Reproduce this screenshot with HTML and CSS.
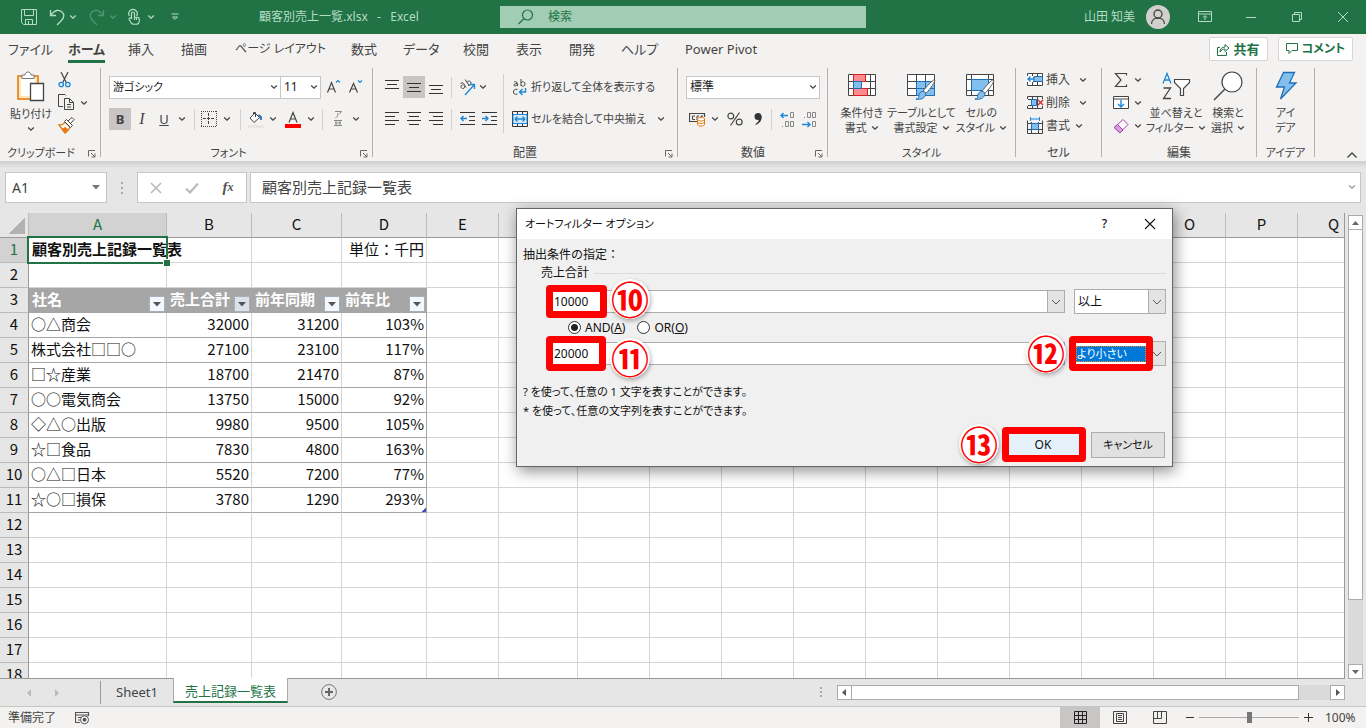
FILE: index.html
```html
<!DOCTYPE html>
<html lang="ja">
<head>
<meta charset="utf-8">
<title>顧客別売上一覧.xlsx - Excel</title>
<link rel="stylesheet" href="styles.css">
</head>
<body>
<svg class="sprite" aria-hidden="true">
  <symbol id="chev" viewBox="0 0 8 8"><path d="M1.200 2.500 4 5.200l2.800-2.700" fill="none" stroke="currentColor" stroke-width="1.300"/></symbol>
  <symbol id="launch" viewBox="0 0 8 8"><path d="M.5 6.500V.5H7M3 3l3.500 3.500M7 3.500V7H3.500" fill="none" stroke="currentColor"/></symbol>
  <symbol id="brush" viewBox="0 0 24 24"><path d="M21.500 1c1.500 1-5 10-9 14l-3-2.500C13 8 20 0 21.500 1z" fill="#fff" stroke="#555"/><path d="M9 13c3 0 4 2 3 4-1 3-5 5-10 4 3-1 3-2 3-4s2-4 4-4z" fill="#83beec" stroke="#1e6fb8"/></symbol>
</svg>

<header class="titlebar">
  <div class="qat">
    <button aria-label="上書き保存"><svg width="18" height="18" viewBox="0 0 18 18"><path d="M1.500 1.500h15v15h-13l-2-2zM4.500 1.500v6h9v-6M5.500 16.500v-5h7v5M8.500 13v3" fill="none" stroke="currentColor"/></svg></button>
    <button aria-label="元に戻す"><svg width="16" height="18" viewBox="0 0 16 18"><path d="M1.500 2v5.500H7M2 7c3-5 8-6 11-3s2 6-1 9l-4 4" fill="none" stroke="currentColor" stroke-width="1.300"/></svg><svg class="chev"><use href="#chev"/></svg></button>
    <button class="dim" aria-label="やり直し"><svg width="16" height="18" viewBox="0 0 16 18"><path d="M14.500 2v5.500H9M14 7C11 2 6 1 3 4s-2 6 1 9l4 4" fill="none" stroke="currentColor" stroke-width="1.300"/></svg><svg class="chev"><use href="#chev"/></svg></button>
    <button aria-label="タッチ/マウス モードの切り替え"><svg width="16" height="18" viewBox="0 0 16 18"><path d="M2.500 8A4.200 4.200 0 1 1 9.500 8M4.500 11V5.500a1.500 1.500 0 0 1 3 0V10M4.500 10.500c-2-1.500-3 0-2 1.500l2 3.500c1 1 6 1 7 0 1-2 1-4 .5-5.500-1-1-3-1-4.500-1M7.500 7v5M9.500 9v3" fill="none" stroke="currentColor" stroke-width="1.200"/></svg><svg class="chev"><use href="#chev"/></svg></button>
    <button aria-label="クイック アクセス ツール バーのユーザー設定"><svg width="8" height="8" viewBox="0 0 8 8"><path d="M.5 1h7M1.500 4 4 6.500 6.500 4z" fill="none" stroke="currentColor"/></svg></button>
  </div>
  <h1 class="doc-title">顧客別売上一覧.xlsx&nbsp;&nbsp; - &nbsp;&nbsp;Excel</h1>
  <label class="search">
    <svg width="16" height="16" viewBox="0 0 16 16"><circle cx="9.500" cy="6" r="5" fill="none" stroke="currentColor" stroke-width="1.200"/><path d="M6 9.500.5 15" stroke="currentColor" stroke-width="1.300"/></svg>
    <input type="search" placeholder="検索" aria-label="検索">
  </label>
  <div class="account">
    <span>山田 知美</span>
    <svg width="24" height="24" viewBox="0 0 24 24"><circle cx="12" cy="12" r="12" fill="#d2d0ce"/><circle cx="12" cy="9" r="4" fill="none" stroke="#444" stroke-width="1.300"/><path d="M5.500 19c0-8 13-8 13 0" fill="none" stroke="#444" stroke-width="1.300"/></svg>
  </div>
  <div class="winbtns">
    <button aria-label="リボンの表示オプション"><svg width="14" height="12" viewBox="0 0 14 12"><path d="M.5.5h13v10H.5zM.5 3h13M7 9V5M5 6.500 7 4.500l2 2" fill="none" stroke="currentColor"/></svg></button>
    <button aria-label="最小化"><svg width="12" height="12" viewBox="0 0 12 12"><path d="M1 6.500h10" stroke="currentColor"/></svg></button>
    <button aria-label="元に戻す(縮小)"><svg width="12" height="12" viewBox="0 0 12 12"><path d="M1.500 3.500h7v7h-7zM3.500 3.500v-2h7v7h-2" fill="none" stroke="currentColor"/></svg></button>
    <button aria-label="閉じる"><svg width="12" height="12" viewBox="0 0 12 12"><path d="m1 1 10 10M11 1 1 11" stroke="currentColor"/></svg></button>
  </div>
</header>

<nav class="tabbar">
  <div class="tabs">
    <button>ファイル</button><button class="current">ホーム</button><button>挿入</button><button>描画</button><button class="kana">ページ レイアウト</button><button>数式</button><button>データ</button><button>校閲</button><button>表示</button><button>開発</button><button>ヘルプ</button><button>Power Pivot</button>
  </div>
  <button class="pill"><svg width="13" height="13" viewBox="0 0 13 13"><path d="M3 4.500H.5v8h9V9M3 9c0-3 2-5 5-5V1.500L12 5 8 8.500V6C6 6 4 7 3 9z" fill="none" stroke="currentColor"/></svg>共有</button>
  <button class="pill kana"><svg width="12" height="12" viewBox="0 0 12 12"><path d="M.5.5h11v7H6l-3 3v-3H.5z" fill="none" stroke="currentColor"/></svg>コメント</button>
</nav>

<section class="ribbon">
  <div class="group g-clip">
    <div class="body">
      <button class="big paste"><svg width="28" height="31" viewBox="0 0 28 31"><path d="M1 5h20v23H1z" fill="#ffe7b5" stroke="#e8760a" stroke-width="1.500"/><path d="M4 8h14v17H4z" fill="#fff"/><path d="M5 7.500V4h3c0-4 6-4 6 0h3v3.500z" fill="#fff" stroke="#777"/><path d="M13.500 12.500h13v17h-13z" fill="#fff" stroke="#444" stroke-width="1.300"/></svg><span>貼り付け</span><svg class="chev"><use href="#chev"/></svg></button>
      <div class="stack">
        <button aria-label="切り取り"><svg width="14" height="17" viewBox="0 0 14 17"><path d="M3 1l5.500 11M10 1 4.500 12" stroke="#444" stroke-width="1.200"/><circle cx="3.200" cy="13.500" r="2.200" fill="none" stroke="#1c87d6" stroke-width="1.300"/><circle cx="9.800" cy="13.500" r="2.200" fill="none" stroke="#1c87d6" stroke-width="1.300"/></svg></button>
        <button aria-label="コピー"><svg width="17" height="17" viewBox="0 0 17 17"><path d="M5 12.500H.5V.5H7l1 1M6.500 4.500h5l4 4v7h-9zM11.500 4.500v4h4M9 10.500h4M9 13h4" fill="none" stroke="#444"/></svg><svg class="chev"><use href="#chev"/></svg></button>
        <button aria-label="書式のコピー/貼り付け"><svg width="17" height="17" viewBox="0 0 17 17"><path d="M1 8c3 0 5-1 6-3l5 5c-1 3-3 4-5 6z" fill="#fff" stroke="#e8760a" stroke-width="1.400"/><path d="M4 12l3-2 3 2-3 3.500z" fill="#e8760a"/><path d="m6.500 4.500 2-2 6 6-2 2zM10 4l4-3.500 2 2L12.500 6.500" fill="#fff" stroke="#444"/></svg></button>
      </div>
    </div>
    <footer>クリップボード<svg class="launch"><use href="#launch"/></svg></footer>
  </div>

  <div class="group g-font">
    <div class="body rows">
      <div class="row fontpick">
        <span class="pick"><select aria-label="フォント"><option>游ゴシック</option></select><svg class="chev"><use href="#chev"/></svg></span>
        <span class="pick size"><select aria-label="フォント サイズ"><option>11</option></select><svg class="chev"><use href="#chev"/></svg></span>
        <button aria-label="拡大"><svg width="16" height="16" viewBox="0 0 16 16"><path d="M1.500 13.500 5.500 3.500l4 10M3 10h5" fill="none" stroke="#444" stroke-width="1.200"/><path d="M10 3.500 12 1.500l2 2" fill="none" stroke="#1c87d6" stroke-width="1.200"/></svg></button>
        <button aria-label="縮小"><svg width="16" height="16" viewBox="0 0 16 16"><path d="M1.500 13.500 5.500 4.500l4 9M3 10h5" fill="none" stroke="#444" stroke-width="1.200"/><path d="M10 1.500 12 3.500l2-2" fill="none" stroke="#1c87d6" stroke-width="1.200"/></svg></button>
      </div>
      <div class="row fonttools">
        <button class="on"><b>B</b></button><button><i class="serif">I</i></button><button><u>U</u></button><button aria-label="下線の種類"><svg class="chev"><use href="#chev"/></svg></button><hr>
        <button aria-label="罫線"><svg width="16" height="16" viewBox="0 0 16 16"><path d="M0 .5h16M0 15.500h16M.5 0v16M15.500 0v16" stroke="#444" stroke-dasharray="1 1"/><path d="M7.500 2v12M2 7.500h12" stroke="#444" stroke-dasharray="3 1"/></svg></button><button aria-label="罫線の種類"><svg class="chev"><use href="#chev"/></svg></button><hr>
        <button aria-label="塗りつぶし"><svg width="16" height="17" viewBox="0 0 16 17"><path d="m2 7 5-5 4.500 4.500-5.500 5zM5.500 4V1.500h2V6" fill="#fff" stroke="#444"/><path d="M10.500 4c3 0 3.500 3 2.500 5-1-1-.5-3-2.500-5z" fill="#1c6fb8" stroke="#1c6fb8"/><path d="M0 14h16v3H0z" fill="#e8e6e4"/></svg></button><button aria-label="塗りつぶしの色"><svg class="chev"><use href="#chev"/></svg></button>
        <button aria-label="フォントの色"><svg width="16" height="17" viewBox="0 0 16 17"><path d="M4 11.500 8 1.500l4 10M5.500 8h5" fill="none" stroke="#444" stroke-width="1.200"/><path d="M0 13h16v4H0z" fill="#f00"/></svg></button><button aria-label="色の選択"><svg class="chev"><use href="#chev"/></svg></button><hr>
        <button aria-label="ふりがな"><svg width="12" height="18" viewBox="0 0 12 18"><path d="M3 1.500h6.500L7.500 4M6 3c0 3-1 4-2.500 5M2 10.500h8M3 13h6M2 15.500h8M4 10.500v5M8 10.500v5" fill="none" stroke="#888"/></svg></button><button aria-label="ふりがなの設定"><svg class="chev"><use href="#chev"/></svg></button>
      </div>
    </div>
    <footer>フォント<svg class="launch"><use href="#launch"/></svg></footer>
  </div>

  <div class="group g-align">
    <div class="body">
      <div class="rows">
        <div class="row aligntools first">
          <button aria-label="上揃え"><svg width="14" height="14" viewBox="0 0 14 14"><path d="M0 .5h14M2 4.500h10M0 8.500h14" stroke="#333"/></svg></button>
          <button class="on" aria-label="上下中央揃え"><svg width="14" height="14" viewBox="0 0 14 14"><path d="M0 3.500h14M2 7.500h10M0 11.500h14" stroke="#333"/></svg></button>
          <button aria-label="下揃え"><svg width="14" height="14" viewBox="0 0 14 14"><path d="M0 5.500h14M2 9.500h10M0 13.500h14" stroke="#333"/></svg></button><hr>
          <button aria-label="方向"><svg width="17" height="17" viewBox="0 0 17 17"><path d="M1.500 5c1-2 3-1 3.500 0l2 3.500M4.500 6C2 5 1 9 3.500 9.500 5.500 9.500 6 8 5.500 7M6 .5l4.500 6.500M8 3.500c1-2.500 4-1.500 4 .5 0 2-2 3-3 2" fill="none" stroke="#444"/><path d="M6 16 15 6M11 5.500h4.500V10" fill="none" stroke="#1c87d6" stroke-width="1.300"/></svg></button>
          <button aria-label="方向の種類"><svg class="chev"><use href="#chev"/></svg></button>
        </div>
        <div class="row aligntools">
          <button aria-label="左揃え"><svg width="14" height="14" viewBox="0 0 14 14"><path d="M0 .5h14M0 4.500h10M0 8.500h14M0 12.500h10" stroke="#333"/></svg></button>
          <button aria-label="中央揃え"><svg width="14" height="14" viewBox="0 0 14 14"><path d="M0 .5h14M2 4.500h10M0 8.500h14M2 12.500h10" stroke="#333"/></svg></button>
          <button aria-label="右揃え"><svg width="14" height="14" viewBox="0 0 14 14"><path d="M0 .5h14M4 4.500h10M0 8.500h14M4 12.500h10" stroke="#333"/></svg></button><hr>
          <button aria-label="インデントを減らす"><svg width="15" height="14" viewBox="0 0 15 14"><path d="M0 .5h15M9 4.500h6M9 8.500h6M0 12.500h15" stroke="#333"/><path d="M1 6.500h6M3.500 4 1 6.500 3.500 9" fill="none" stroke="#1c87d6" stroke-width="1.400"/></svg></button>
          <button aria-label="インデントを増やす"><svg width="15" height="14" viewBox="0 0 15 14"><path d="M0 .5h15M9 4.500h6M9 8.500h6M0 12.500h15" stroke="#333"/><path d="M0 6.500h6M3.500 4 6 6.500 3.500 9" fill="none" stroke="#1c87d6" stroke-width="1.400"/></svg></button>
        </div>
      </div>
      <hr class="tall">
      <div class="rows">
        <div class="row"><button class="wide"><svg width="16" height="18" viewBox="0 0 16 18"><path d="M2 4c2-1 4 0 3.500 4M5.500 5.500C2 5 1 8 3 8c1.500 0 2-1 2.500-2M9 1v7M9 5c1-2 4-1.500 4 1s-3 3-4 1M5.500 11.500c-3-1-4 1-4 2.500s1 3 4 2" fill="none" stroke="#444"/><path d="M13.500 10v4H8M10.500 11 7.500 14l3 3" fill="none" stroke="#1c87d6" stroke-width="1.400"/></svg>折り返して全体を表示する</button></div>
        <div class="row"><button class="wide merge"><svg width="16" height="16" viewBox="0 0 16 16"><path d="M.5.5h15v15H.5zM5.500.5v3M10.500.5v3M5.500 12.500v3M10.500 12.500v3" fill="none" stroke="#333"/><path d="M1 3.500h14v9H1z" fill="#d5ebfa" stroke="#1c87d6"/><path d="M3 8h10M5.500 5.500 3 8l2.500 2.500M10.500 5.500 13 8l-2.500 2.500" fill="none" stroke="#1c87d6" stroke-width="1.300"/></svg><span>セルを結合して中央揃え</span><svg class="chev"><use href="#chev"/></svg></button></div>
      </div>
    </div>
    <footer>配置<svg class="launch"><use href="#launch"/></svg></footer>
  </div>

  <div class="group g-num">
    <div class="body rows">
      <div class="row"><span class="pick"><select aria-label="表示形式"><option>標準</option></select><svg class="chev"><use href="#chev"/></svg></span></div>
      <div class="row numtools">
        <button aria-label="通貨表示形式"><svg width="17" height="16" viewBox="0 0 17 16"><path d="M8 10.500H.5v-8h15V6" fill="none" stroke="#444" stroke-width="1.200"/><path d="M6 5H3.500v3.500H6M8 9V5h2M12 8V5h2" fill="none" stroke="#444"/><path d="M8.500 8c0-2 7-2 7 0v5.500c0 2-7 2-7 0z" fill="#fff" stroke="#e8760a"/><path d="M8.500 8.500c0 2 7 2 7 0M8.500 11c0 2 7 2 7 0" fill="none" stroke="#e8760a"/></svg></button>
        <button aria-label="通貨の種類"><svg class="chev"><use href="#chev"/></svg></button>
        <button aria-label="パーセント スタイル"><svg width="16" height="16" viewBox="0 0 16 16"><circle cx="3.800" cy="5" r="2.900" fill="none" stroke="#444" stroke-width="1.200"/><circle cx="12.200" cy="11" r="2.900" fill="none" stroke="#444" stroke-width="1.200"/><path d="m12.500 1.500-9 13" stroke="#444" stroke-width="1.200"/></svg></button>
        <button aria-label="桁区切りスタイル"><svg width="10" height="14" viewBox="0 0 10 14"><circle cx="5" cy="4.500" r="3.500" fill="#333"/><path d="M8.500 4c.5 4-1 7-6 9v-1c3-2 4-4 3-7z" fill="#333"/></svg></button><hr>
        <button aria-label="小数点以下の表示桁数を増やす"><svg width="17" height="17" viewBox="0 0 17 17"><path d="M2 4.500h7M4.500 2 2 4.500 4.500 7" fill="none" stroke="#1c87d6" stroke-width="1.400"/><path d="M11.500 1.500h3v5h-3zM6.500 10.500h3v5h-3zM11.500 10.500h3v5h-3zM3 15.500h1" fill="none" stroke="#888"/></svg></button>
        <button aria-label="小数点以下の表示桁数を減らす"><svg width="17" height="17" viewBox="0 0 17 17"><path d="M1 13.500h8M6.500 11 9 13.500 6.500 16" fill="none" stroke="#1c87d6" stroke-width="1.400"/><path d="M6.500 1.500h3v5h-3zM11.500 1.500h3v5h-3zM11.500 10.500h3v5h-3zM3 6.500h1" fill="none" stroke="#888"/></svg></button>
      </div>
    </div>
    <footer>数値<svg class="launch"><use href="#launch"/></svg></footer>
  </div>

  <div class="group g-style">
    <div class="body">
      <button class="big"><svg width="30" height="30" viewBox="0 0 30 30"><path d="M1.500 3.500h27v21h-27zM6.500 3v21M23.500 3v21M1.500 10.500h27M1.500 17.500h27" fill="#fff" stroke="#444"/><path d="M6.500 3.500h12v7h-12zM6.500 17.500h14v7h-14z" fill="#ff8b90" stroke="#d81e1e"/><path d="M6.500 10.500h8v7h-8z" fill="#83beec" stroke="#1e6fb8"/></svg><span>条件付き<br>書式<svg class="chev"><use href="#chev"/></svg></span></button>
      <button class="big"><svg width="32" height="30" viewBox="0 0 32 30"><path d="M1.500 3.500h27v21h-27zM10.500 3v21M19.500 3v21M1.500 10.500h27M1.500 17.500h27" fill="#fff" stroke="#444"/><path d="M10.500 10.500h18v14h-18zM19.500 10.500v14M10.500 17.500h18" fill="#83beec" stroke="#1e6fb8"/><use href="#brush" x="8" y="8" width="23" height="23"/></svg><span>テーブルとして<br>書式設定<svg class="chev"><use href="#chev"/></svg></span></button>
      <button class="big"><svg width="32" height="30" viewBox="0 0 32 30"><path d="M1.500 3.500h27v21h-27zM6.500 3v21M23.500 3v21M1.500 8.500h27M1.500 19.500h27" fill="#fff" stroke="#444"/><path d="M6.500 8.500h17v11h-17z" fill="#83beec" stroke="#1e6fb8"/><use href="#brush" x="8" y="8" width="23" height="23"/></svg><span>セルの<br>スタイル<svg class="chev"><use href="#chev"/></svg></span></button>
    </div>
    <footer>スタイル</footer>
  </div>

  <div class="group g-cell">
    <div class="body stack">
      <button><svg width="17" height="16" viewBox="0 0 17 16"><path d="M.5 1.500h15v12H.5zM5.500 1v12M10.500 1v12M.5 5.500h15M.5 9.500h15" fill="#fff" stroke="#444"/><path d="M7 4.500h8.500v5H7z" fill="#83beec" stroke="#1e6fb8"/><path d="M0 4h6v6H0z" fill="#fff"/><path d="M1 7h6M3.500 4.500 1 7l2.500 2.500" fill="none" stroke="#1c87d6" stroke-width="1.300"/></svg><span>挿入</span><svg class="chev"><use href="#chev"/></svg></button>
      <button><svg width="17" height="16" viewBox="0 0 17 16"><path d="M.5 4V1.500h15V4M.5 11v2.500h15V11M5.500 1v12M10.500 1v12M1 4.500h8M1 10.500h8" fill="none" stroke="#444"/><path d="M4.500 4.500h5v6h-5z" fill="#83beec" stroke="#1e6fb8"/><path d="m11 5 5 5M16 5l-5 5" stroke="#e0282e" stroke-width="1.400"/></svg><span>削除</span><svg class="chev"><use href="#chev"/></svg></button>
      <button><svg width="17" height="17" viewBox="0 0 17 17"><path d="M3.500 0v4M12.500 0v4M4 2h8" stroke="#1c87d6"/><path d="M.5 3.500v13h15v-13M4.500 5v11M11.500 5v11M.5 6.500h15M.5 12.500h15" fill="none" stroke="#444"/><path d="M4.500 6.500h7v6h-7z" fill="#83beec" stroke="#1e6fb8"/></svg><span>書式</span><svg class="chev"><use href="#chev"/></svg></button>
    </div>
    <footer>セル</footer>
  </div>

  <div class="group g-edit">
    <div class="body">
      <div class="stack">
        <button aria-label="合計"><svg width="16" height="16" viewBox="0 0 16 16"><path d="M13.500 3.500v-2h-11L8 8l-5.500 6.500h11v-2" fill="none" stroke="#444" stroke-width="1.200"/></svg><svg class="chev"><use href="#chev"/></svg></button>
        <button aria-label="フィル"><svg width="16" height="16" viewBox="0 0 16 16"><path d="M.5 1.500h15v12H.5zM.5 4h15" fill="#fff" stroke="#444"/><path d="M8 5v7M5 9l3 3 3-3" fill="none" stroke="#1c87d6" stroke-width="1.400"/></svg><svg class="chev"><use href="#chev"/></svg></button>
        <button aria-label="クリア"><svg width="16" height="16" viewBox="0 0 16 16"><path d="M10 1.500 15 6.500l-8 8-5.500-5z" fill="#fff" stroke="#a33bab"/><path d="M4.500 6.500 10 12l-3 3-6-5.500z" fill="#d59fdc" stroke="#a33bab"/></svg><svg class="chev"><use href="#chev"/></svg></button>
      </div>
      <button class="big"><svg width="30" height="30" viewBox="0 0 30 30"><path d="M2 12.500 6 2.500l4 10M3.500 9h5" fill="none" stroke="#1c87d6" stroke-width="1.300"/><path d="M2.500 17h7l-7 10.500h7.500" fill="none" stroke="#444" stroke-width="1.300"/><path d="M13.500 8.500h15v3l-6 6v7h-3v-7l-6-6z" fill="#fff" stroke="#444" stroke-width="1.200"/></svg><span>並べ替えと<br>フィルター<svg class="chev"><use href="#chev"/></svg></span></button>
      <button class="big"><svg width="32" height="30" viewBox="0 0 32 30"><circle cx="20" cy="11" r="10" fill="#fff" stroke="#444" stroke-width="1.200"/><path d="M13 18 2 29" stroke="#444" stroke-width="1.400"/></svg><span>検索と<br>選択<svg class="chev"><use href="#chev"/></svg></span></button>
    </div>
    <footer>編集</footer>
  </div>

  <div class="group g-idea">
    <div class="body"><button class="big"><svg width="24" height="30" viewBox="0 0 24 30"><path d="M9.500 1.500h11l-5 10.500h6.500L6.500 28l4-12h-8z" fill="#83beec" stroke="#1e6fb8" stroke-width="1.300"/></svg><span>アイ<br>デア</span></button></div>
    <footer>アイデア</footer>
  </div>
  <button class="collapse" aria-label="リボンを折りたたむ"><svg width="12" height="8" viewBox="0 0 12 8"><path d="m1.500 6.500 4.500-4.500 4.500 4.500" fill="none" stroke="#444" stroke-width="1.300"/></svg></button>
</section>

<section class="formula">
  <span class="namebox"><input value="A1" aria-label="名前ボックス"><svg width="8" height="5" viewBox="0 0 8 5"><path d="M0 0h8L4 4.500z" fill="#777"/></svg></span>
  <svg class="grip" width="4" height="12" viewBox="0 0 4 12"><path d="M1 0h2v2H1zM1 5h2v2H1zM1 10h2v2H1z" fill="#aaa"/></svg>
  <span class="fxbtns">
    <button aria-label="キャンセル"><svg width="12" height="12" viewBox="0 0 12 12"><path d="m1 1 10 10M11 1 1 11" stroke="#bbb" stroke-width="1.700"/></svg></button>
    <button aria-label="入力"><svg width="14" height="12" viewBox="0 0 14 12"><path d="m1 6.500 4 4L13 1.500" fill="none" stroke="#bbb" stroke-width="2.200"/></svg></button>
    <button class="fx" aria-label="関数の挿入">f<small>x</small></button>
  </span>
  <span class="fxinput"><input value="顧客別売上記録一覧表" aria-label="数式バー"><svg class="chev"><use href="#chev"/></svg></span>
</section>

<main class="workspace">
  <div class="sheet"><table id="grid"></table></div>
  <div class="vscroll">
    <button aria-label="上へ"><svg width="7" height="4" viewBox="0 0 7 4"><path d="M3.500 0 7 4H0z" fill="#666"/></svg></button>
    <div class="thumb"></div>
    <button aria-label="下へ"><svg width="7" height="4" viewBox="0 0 7 4"><path d="M0 0h7L3.500 4z" fill="#666"/></svg></button>
  </div>
</main>

<div class="sheetbar">
  <div class="navs"><svg width="5" height="8" viewBox="0 0 5 8"><path d="M5 0v8L1 4z" fill="#bbb"/></svg><svg width="5" height="8" viewBox="0 0 5 8"><path d="M0 0v8l4-4z" fill="#bbb"/></svg></div>
  <button class="stab">Sheet1</button>
  <button class="stab active">売上記録一覧表</button>
  <button class="addsheet" aria-label="新しいシート"><svg width="16" height="16" viewBox="0 0 16 16"><circle cx="8" cy="8" r="7.400" fill="none" stroke="#777"/><path d="M8 4v8M4 8h8" stroke="#666" stroke-width="2"/></svg></button>
  <svg class="hgrip" width="4" height="12" viewBox="0 0 4 12"><path d="M1 1h2v2H1zM1 5h2v2H1zM1 9h2v2H1z" fill="#aaa"/></svg>
  <div class="hscroll">
    <button aria-label="左へ"><svg width="4" height="7" viewBox="0 0 4 7"><path d="M4 0v7L0 3.500z" fill="#555"/></svg></button>
    <div class="thumb"></div>
    <button aria-label="右へ"><svg width="4" height="7" viewBox="0 0 4 7"><path d="M0 0v7l4-3.500z" fill="#555"/></svg></button>
  </div>
</div>

<footer class="status">
  <span>準備完了</span>
  <svg class="rec" width="15" height="14" viewBox="0 0 15 14"><path d="M5 11.500H.5V1.500h13V5M.5 4h13M3 6.500h3M3 9h2" fill="none" stroke="#555" stroke-width="1.200"/><circle cx="9.500" cy="8.800" r="4" fill="#fff" stroke="#555"/><circle cx="9.500" cy="8.800" r="2" fill="#555"/></svg>
  <div class="views">
    <button class="on" aria-label="標準"><svg width="13" height="13" viewBox="0 0 13 13"><path d="M.5.5h12v12H.5zM4.500 0v13M8.500 0v13M0 4.500h13M0 8.500h13" fill="none" stroke="#222"/></svg></button>
    <button aria-label="ページ レイアウト"><svg width="14" height="13" viewBox="0 0 14 13"><path d="M.5.5h13v12H.5zM3.500 2.500h7v8h-7zM5 4.500h4M5 6.500h4M5 8.500h4" fill="none" stroke="#444"/></svg></button>
    <button aria-label="改ページ プレビュー"><svg width="14" height="13" viewBox="0 0 14 13"><path d="M.5.5h13v12H.5zM.5 7.500h8M4.500.5v7M8.500.5v7" fill="none" stroke="#444"/></svg></button>
  </div>
  <div class="zoom">
    <button aria-label="縮小"><svg width="8" height="9" viewBox="0 0 8 9"><path d="M0 4.500h8" stroke="#333"/></svg></button>
    <input type="range" min="0" max="100" value="50" aria-label="ズーム">
    <button aria-label="拡大"><svg width="9" height="9" viewBox="0 0 9 9"><path d="M0 4.500h9M4.500 0v9" stroke="#333"/></svg></button>
    <span>100%</span>
  </div>
</footer>

<div class="dialog" role="dialog" aria-labelledby="dlg-title">
  <div class="dlg-head">
    <h2 id="dlg-title">オートフィルター オプション</h2>
    <button aria-label="ヘルプ">?</button>
    <button aria-label="閉じる"><svg width="12" height="12" viewBox="0 0 12 12"><path d="m1 1 10 10M11 1 1 11" stroke="#111" stroke-width="1.100"/></svg></button>
  </div>
  <form class="dlg-body">
    <p class="lead">抽出条件の指定：</p>
    <div class="legend">売上合計</div>
    <div class="cond">
      <span class="combo"><input value="10000" aria-label="条件1の値"><span class="drop"><svg class="dchev" viewBox="0 0 10 6"><path d="m1 1 4 4 4-4" fill="none" stroke="#555"/></svg></span></span>
      <span class="combo op"><select aria-label="条件1"><option>以上</option></select><span class="drop"><svg class="dchev" viewBox="0 0 10 6"><path d="m1 1 4 4 4-4" fill="none" stroke="#555"/></svg></span></span>
    </div>
    <div class="logic">
      <label><input type="radio" name="logic" checked><span>AND(<u>A</u>)</span></label>
      <label><input type="radio" name="logic"><span>OR(<u>O</u>)</span></label>
    </div>
    <div class="cond">
      <span class="combo"><input value="20000" aria-label="条件2の値"><span class="drop"><svg class="dchev" viewBox="0 0 10 6"><path d="m1 1 4 4 4-4" fill="none" stroke="#555"/></svg></span></span>
      <span class="combo op focus"><select aria-label="条件2"><option>より小さい</option></select><span class="drop"><svg class="dchev" viewBox="0 0 10 6"><path d="m1 1 4 4 4-4" fill="none" stroke="#555"/></svg></span></span>
    </div>
    <div class="hints"><p>? を使って、任意の 1 文字を表すことができます。</p><p>* を使って、任意の文字列を表すことができます。</p></div>
    <div class="actions"><button type="button" class="ok">OK</button><button type="button" class="cancel">キャンセル</button></div>
  </form>
  <div class="mark m10"></div><div class="num n10">⑩</div>
  <div class="mark m11"></div><div class="num n11">⑪</div>
  <div class="mark m12"></div><div class="num n12">⑫</div>
  <div class="mark m13"></div><div class="num n13">⑬</div>
</div>
<script src="sheet.js"></script>
</body>
</html>
```

FILE: styles.css
```css
* { box-sizing: border-box; }
html, body { height: 100%; }
body {
  margin: 0; display: flex; flex-direction: column; overflow: hidden; position: relative;
  font: 12px/16px "Noto Sans", "Noto Sans CJK JP", sans-serif;
  font-feature-settings: "palt"; color: #444; background: #e6e6e6;
}
button, input, select { font: inherit; font-feature-settings: inherit; color: inherit; margin: 0; }
button { border: 0; background: none; padding: 0; display: flex; align-items: center; justify-content: center; white-space: nowrap; }
svg { flex: none; display: block; }
h1, h2, p { margin: 0; font-size: 12px; font-weight: 400; }
hr { width: 1px; height: 21px; border: 0; margin: 0; background: #d2d0ce; justify-self: center; }
.sprite { position: absolute; width: 0; height: 0; }
.chev { width: 8px; height: 8px; }
.on { background: #c8c6c4; }

/* title bar */
.titlebar { height: 34px; flex: none; display: flex; align-items: center; background: #217346; color: #b5dcc5; }
.qat { display: grid; grid-template-columns: 26px 42px 38px 38px 30px; width: 259px; padding-left: 16px; }
.qat button { gap: 4px; height: 34px; }
.dim { color: #4f9770; }
.doc-title { width: 241px; line-height: 32px; white-space: nowrap; }
.search { width: 366px; height: 22px; display: flex; align-items: center; gap: 14px; padding-left: 18px; background: #a0cdb4; color: #217346; }
.search input { border: 0; background: none; outline: 0; flex: 1; padding: 0; }
.search input::placeholder { color: #217346; opacity: 1; }
.account { margin-left: auto; display: flex; align-items: center; gap: 11px; margin-right: 12px; }
.winbtns { display: flex; }
.winbtns button { width: 46px; height: 32px; }

/* ribbon tabs */
.tabbar { flex: none; height: 30px; display: flex; align-items: center; gap: 10px; padding-right: 13px; background: #f3f2f1; font-size: 13px; }
.tabs { flex: 1; padding-left: 8px; display: grid; grid-template-columns: 60px 60px 53px 54px 116px 52px 60px 53px 53px 52px 64px auto; }
.tabs button { justify-self: start; height: 25px; border-bottom: 3px solid transparent; margin-top: 2px; }
.tabs .current { font-weight: 700; border-color: #217346; }
.tabbar .kana { font-size: 12px; }
.pill { height: 24px; padding: 0 7px; gap: 4px; background: #fff; border: 1px solid #d8d6d4; border-radius: 2px; color: #217346; font-weight: 700; }

/* ribbon */
.ribbon { flex: none; height: 97px; padding-top: 4px; display: flex; background: #f3f2f1; }
.group { flex: none; height: 89px; display: flex; flex-direction: column; border-right: 1px solid #b3b0ad; }
.group > .body { flex: 1; display: flex; }
.group footer { position: relative; height: 16px; margin-bottom: -4px; text-align: center; }
.launch { position: absolute; right: 4px; top: 5px; width: 8px; height: 8px; color: #666; }
.body.rows, .rows { display: flex; flex-direction: column; gap: 8px; padding-top: 7px; }
.row { display: grid; height: 24px; align-items: center; }
.row button { height: 22px; }
.big { flex-direction: column; align-self: flex-start; font-size: 11px; line-height: 15px; padding-top: 3px; }
.big span { display: block; margin-top: 4px; text-align: center; }
.big span .chev { display: inline-block; margin-left: 4px; }
.stack, .body.stack { display: flex; flex-direction: column; }
.stack button { height: 23px; justify-content: flex-start; }

.g-clip { width: 101px; }
.g-clip .body { padding-left: 9px; }
.g-clip footer { padding-right: 18px; font-size: 11px; }
.paste { width: 44px; }
.paste .chev { margin-top: 4px; }
.g-clip .stack { padding-left: 5px; }
.g-clip .stack button { gap: 5px; }

.g-font { width: 272px; padding-left: 8px; }
.g-font footer, .g-idea footer, .g-style footer { font-size: 11px; }
.g-font footer { padding-right: 24px; }
.fontpick { grid-template-columns: 172px 40px 26px 18px; }
.fonttools { grid-template-columns: 22px 22px 22px 14px 10px 20px 16px 10px 21px 14px 26px 10px 12px 20px 16px; }
.fonttools b, .fonttools i, .fonttools u { font-size: 13px; }
.fonttools .serif { font: italic 16px "Liberation Serif", serif; }
.pick { display: flex; align-items: center; height: 23px; border: 1px solid #c8c6c4; background: #fff; padding-right: 2px; }
.pick.size { border-left: 0; }
.pick select { appearance: none; border: 0; background: none; flex: 1; min-width: 0; padding: 0 3px; color: #222; }
.fontpick .pick:first-child select { font-size: 11px; }

.g-align { width: 305px; }
.aligntools { grid-template-columns: 22px 22px 22px 8px 24px 20px; padding-left: 8px; }
.aligntools.first { grid-template-columns: 22px 22px 22px 8px 24px 8px; }
.tall { height: 59px; margin: 6px 8px 0 4px; }
.wide { justify-content: flex-start; gap: 3px; font-size: 11px; }
.merge span { margin-right: 8px; }
.g-num { width: 150px; padding: 0 7px 0 8px; }
.g-num .launch { right: -3px; }
.numtools { grid-template-columns: 23px 12px 27px 19px 9px 22px 22px; }

.g-style { width: 188px; padding: 0 4px; }
.g-style .big { width: 60px; }
.g-cell { width: 86px; }
.g-cell .body { padding-left: 11px; }
.g-cell .stack span { width: 31px; text-align: left; }
.g-cell .stack button { gap: 2px; }
.g-cell .stack button:last-child span { width: 27px; }
.g-edit { width: 155px; }
.g-edit .body { padding-left: 11px; }
.g-edit .stack { width: 36px; }
.g-edit .stack button { gap: 5px; }
.g-edit .big { width: 54px; }
.g-edit .big + .big { width: 50px; }
.g-idea { width: 58px; }
.g-idea .big { width: 57px; }
.collapse { margin: auto 8px 2px auto; }

/* formula bar */
.formula { flex: none; height: 52px; display: flex; align-items: flex-start; padding: 11px 5px 0; font-size: 15px; background: linear-gradient(#cfcfcf, #e6e6e6 7px); }
.namebox, .fxbtns, .fxinput { height: 31px; display: flex; align-items: center; background: #fff; border: 1px solid #c6c6c6; }
.namebox { width: 102px; padding: 0 6px; font-size: 14px; }
.formula input { border: 0; padding: 0; background: none; flex: 1; min-width: 0; font-feature-settings: normal; }
.grip { margin: 10px 13px 0; }
.fxbtns { width: 110px; }
.fxbtns button { flex: 1; }
.fx { font: italic 700 15px "Liberation Serif", serif; color: #555; }
.fx small { font-size: 12px; }
.fxinput { flex: 1; margin-left: 3px; padding: 0 4px 2px 11px; font-family: "Noto Sans CJK JP", sans-serif; }
.fxinput .chev { color: #999; }

/* worksheet */
.workspace { flex: 1; min-height: 0; display: flex; }
.sheet { flex: 1; min-width: 0; overflow: hidden; background: #fff; border-right: 1px solid #999; border-bottom: 1px solid #999; }
.sheet table { width: max-content; table-layout: fixed; border-collapse: separate; border-spacing: 0; font: 15px/22px "Noto Sans CJK JP", sans-serif; color: #111; font-feature-settings: normal; }
.sheet td, .sheet th { height: 25px; padding: 0 2px 2px; border-right: 1px solid #d4d4d4; border-bottom: 1px solid #d4d4d4; font-weight: 400; white-space: nowrap; }
.sheet thead th { background: #e6e6e6; border-color: #bbb; border-bottom-color: #999; }
.sheet tbody th { background: #e6e6e6; border-color: #bbb; border-right-color: #999; padding: 0 0 2px; }
.sheet .hot { background: #d2d2d2; color: #217346; }
.sheet thead .hot { border-bottom-color: #217346; }
.sheet .all { background: linear-gradient(135deg, transparent 50%, #b2b2b2 50%) 8px 4px / 17px 17px no-repeat #e6e6e6; }
.sheet .n { text-align: right; }
.sheet .t { border-bottom-color: #a6a6a6; }
.sheet .edge { border-right-color: #a6a6a6; }
.sheet .head { background: #a6a6a6; border-color: #a6a6a6; color: #fff; font-weight: 700; padding: 0 1px 0 3px; }
.cap { display: flex; justify-content: space-between; align-items: flex-end; line-height: 22px; }
.cap span { padding-bottom: 2px; }
.cap button { width: 16px; height: 16px; background: #f4f7fb; border: 1px solid #a5b0bd; }
.cap .lit { background: #dde1e8; }
.sheet .pick1 { position: relative; font-weight: 700; padding-left: 3px; max-width: 138px; }
.pick1::before { content: ""; position: absolute; inset: -2px; border: 2px solid #217346; }
.pick1::after { content: ""; position: absolute; right: -4px; bottom: -4px; width: 6px; height: 6px; background: #217346; border: 1px solid #fff; border-width: 1px 0 0 1px; }
.sheet .last { position: relative; }
.last::after { content: ""; position: absolute; right: 0; bottom: 0; width: 4px; height: 4px; background: linear-gradient(135deg, transparent 40%, #3f51b5 40%); }
.vscroll { width: 21px; padding: 2px 3px 0; display: flex; flex-direction: column; background: linear-gradient(#dadada, #dadada) 3px 2px / 15px 100% no-repeat #e6e6e6; }
.vscroll button, .hscroll button { flex: none; width: 15px; height: 15px; border: 1px solid #ababab; background: #fff; }
.vscroll .thumb { height: 80%; margin: -1px 0 auto; border: 1px solid #ababab; background: #fff; }

/* sheet tabs */
.sheetbar { flex: none; height: 28px; display: flex; align-items: flex-start; padding-right: 21px; border-bottom: 1px solid #c6c6c6; }
.navs { width: 101px; height: 23px; margin-top: 2px; padding: 0 40px 0 26px; display: flex; align-items: center; justify-content: space-between; border-right: 1px solid #999; }
.stab { width: 72px; height: 25px; font-size: 13px; }
.active { width: 115px; margin-top: -1px; height: 25px; padding-top: 2px; background: #fff; color: #217346; border: 1px solid #aaa; border-top: 0; border-bottom: 2px solid #217346; }
.addsheet { margin: 5px auto 0 33px; }
.hgrip { margin: 7px 14px 0 0; }
.hscroll { width: 37.8%; height: 15px; margin-top: 6px; display: flex; background: #dadada; }
.hscroll .thumb { flex: 1; margin-right: 31px; border: 1px solid #ababab; border-left: 0; background: #fff; }

/* status bar */
.status { flex: none; height: 21px; display: flex; align-items: center; padding: 0 8px; background: #f3f2f1; }
.rec { margin-left: 19px; }
.views { margin-left: auto; display: flex; height: 21px; }
.views button { width: 40px; }
.zoom { display: flex; align-items: center; margin-left: 6px; }
.zoom input { appearance: none; width: 100px; height: 11px; margin: 0 5px; background: linear-gradient(#aaa, #aaa) 0 5px / 100% 1px no-repeat; }
.zoom input::-webkit-slider-thumb { appearance: none; width: 5px; height: 11px; background: #777; }
.zoom span { margin-left: 12px; width: 33px; }

/* dialog */
.dialog { position: absolute; left: 516px; top: 208px; width: 657px; height: 259px; border: 1px solid #666; background: #f0f0f0; color: #111; box-shadow: 2px 4px 14px rgba(0,0,0,.45); }
.dlg-head { height: 30px; display: flex; align-items: center; background: #fff; padding-left: 8px; }
.dlg-head h2 { flex: 1; font-size: 11px; }
.dlg-head button { width: 45px; font-weight: 500; }
.dlg-body { padding: 8px 6px 0; }
.lead { font-feature-settings: normal; }
.legend { display: flex; align-items: center; gap: 5px; margin: 2px 0 0 18px; }
.legend::after { content: ""; flex: 1; height: 1px; background: #dcdcdc; }
.cond { display: flex; align-items: center; gap: 9px; margin: 8px 0 0 23px; height: 25px; }
.combo { flex: 1; height: 23px; display: flex; border: 1px solid #adadad; background: #fff; }
.combo input, .combo select { appearance: none; flex: 1; min-width: 0; border: 0; padding: 0 7px; background: none; outline: 0; }
.combo.op { flex: none; width: 92px; height: 25px; }
.combo select { padding: 0 3px; }
.drop { width: 17px; display: flex; align-items: center; justify-content: center; background: #e3e3e3; border-left: 1px solid #adadad; }
.dchev { width: 10px; height: 6px; }
.focus select { margin: 4px 2px 3px 1px; padding: 0 1px; font-size: 11px; line-height: 14px; background: #0078d7; color: #fff; outline: 1px dotted #e88b2a; outline-offset: -1px; }
.logic { display: flex; gap: 12px; height: 17px; margin: 5px 0 0 45px; }
.logic + .cond { margin-top: 5px; }
.logic label { display: flex; align-items: center; gap: 4px; }
.logic input { appearance: none; width: 13px; height: 13px; border: 1px solid #333; border-radius: 50%; background: #fff; }
.logic input:checked { background: radial-gradient(#222 3px, #fff 4px); }
.hints { margin-top: 16px; }
.hints p { font-size: 11px; line-height: 19px; }
.actions { display: flex; justify-content: flex-end; gap: 10px; padding-right: 1px; margin-top: 12px; }
.actions button { width: 74px; height: 26px; background: #e1e1e1; border: 1px solid #adadad; }
.actions .cancel { font-size: 11px; }
.actions .ok { width: 76px; background: #e5f1fb; border-color: #0078d7; }

/* numbered callouts laid over the dialog */
.mark { position: absolute; border: 7px solid #f00; border-radius: 4px; }
.m10 { left: 29px; top: 76px; width: 61px; height: 33px; }
.m11 { left: 29px; top: 127px; width: 60px; height: 35px; }
.m12 { left: 552px; top: 127px; width: 84px; height: 35px; }
.m13 { left: 485px; top: 218px; width: 84px; height: 35px; }
.num { position: absolute; width: 40px; height: 40px; border-radius: 50%; background: #fff; color: #f00; box-shadow: 1px 2px 4px rgba(0,0,0,.3); font: 700 38px/38px "Noto Sans CJK JP", sans-serif; font-feature-settings: normal; display: flex; justify-content: center; }
.n10 { left: 93px; top: 70px; }
.n11 { left: 93px; top: 129px; }
.n12 { left: 509px; top: 124px; }
.n13 { left: 442px; top: 215px; }
```

FILE: sheet.js
```js
const columns = [['A',138],['B',85],['C',90],['D',85],['E',72],['F',79]]
  .concat([...'GHIJKLMNOPQ'].map(c => [c, 72]));
const rows = {
  4: ['○△商会', '32000', '31200', '103%'],
  5: ['株式会社□□○', '27100', '23100', '117%'],
  6: ['□☆産業', '18700', '21470', '87%'],
  7: ['○○電気商会', '13750', '15000', '92%'],
  8: ['◇△○出版', '9980', '9500', '105%'],
  9: ['☆□食品', '7830', '4800', '163%'],
  10: ['○△□日本', '5520', '7200', '77%'],
  11: ['☆○□損保', '3780', '1290', '293%']
};
const heads = ['社名', '売上合計', '前年同期', '前年比'];
const arrow = '<svg width="8" height="5" viewBox="0 0 8 5"><path d="M0 0h8L4 4.500z" fill="#555"/></svg>';

let html = '<colgroup><col style="width:29px">' +
  columns.map(c => `<col style="width:${c[1]}px">`).join('') +
  '</colgroup><thead><tr><th class="all"></th>' +
  columns.map((c, i) => `<th class="${i ? '' : 'hot'}">${c[0]}</th>`).join('') + '</tr></thead><tbody>';

for (let r = 1; r <= 18; r++) {
  html += `<tr><th class="${r === 1 ? 'hot' : ''}">${r}</th>`;
  columns.forEach((c, i) => {
    let cls = '', text = '';
    if (r === 1 && i === 0) { cls = 'pick1'; text = '顧客別売上記録一覧表'; }
    else if (r === 1 && i === 3) { cls = 'n'; text = '単位：千円'; }
    else if (r === 3 && i < 4) {
      cls = 'head';
      text = `<div class="cap"><span>${heads[i]}</span><button class="${i === 1 ? 'lit' : ''}" aria-label="${heads[i]}のフィルター">${arrow}</button></div>`;
    } else if (rows[r] && i < 4) {
      cls = 't' + (i ? ' n' : '') + (i === 3 ? ' edge' : '') + (i === 3 && r === 11 ? ' last' : '');
      text = rows[r][i];
    }
    html += `<td class="${cls}">${text}</td>`;
  });
  html += '</tr>';
}
document.getElementById('grid').innerHTML = html + '</tbody>';
```
